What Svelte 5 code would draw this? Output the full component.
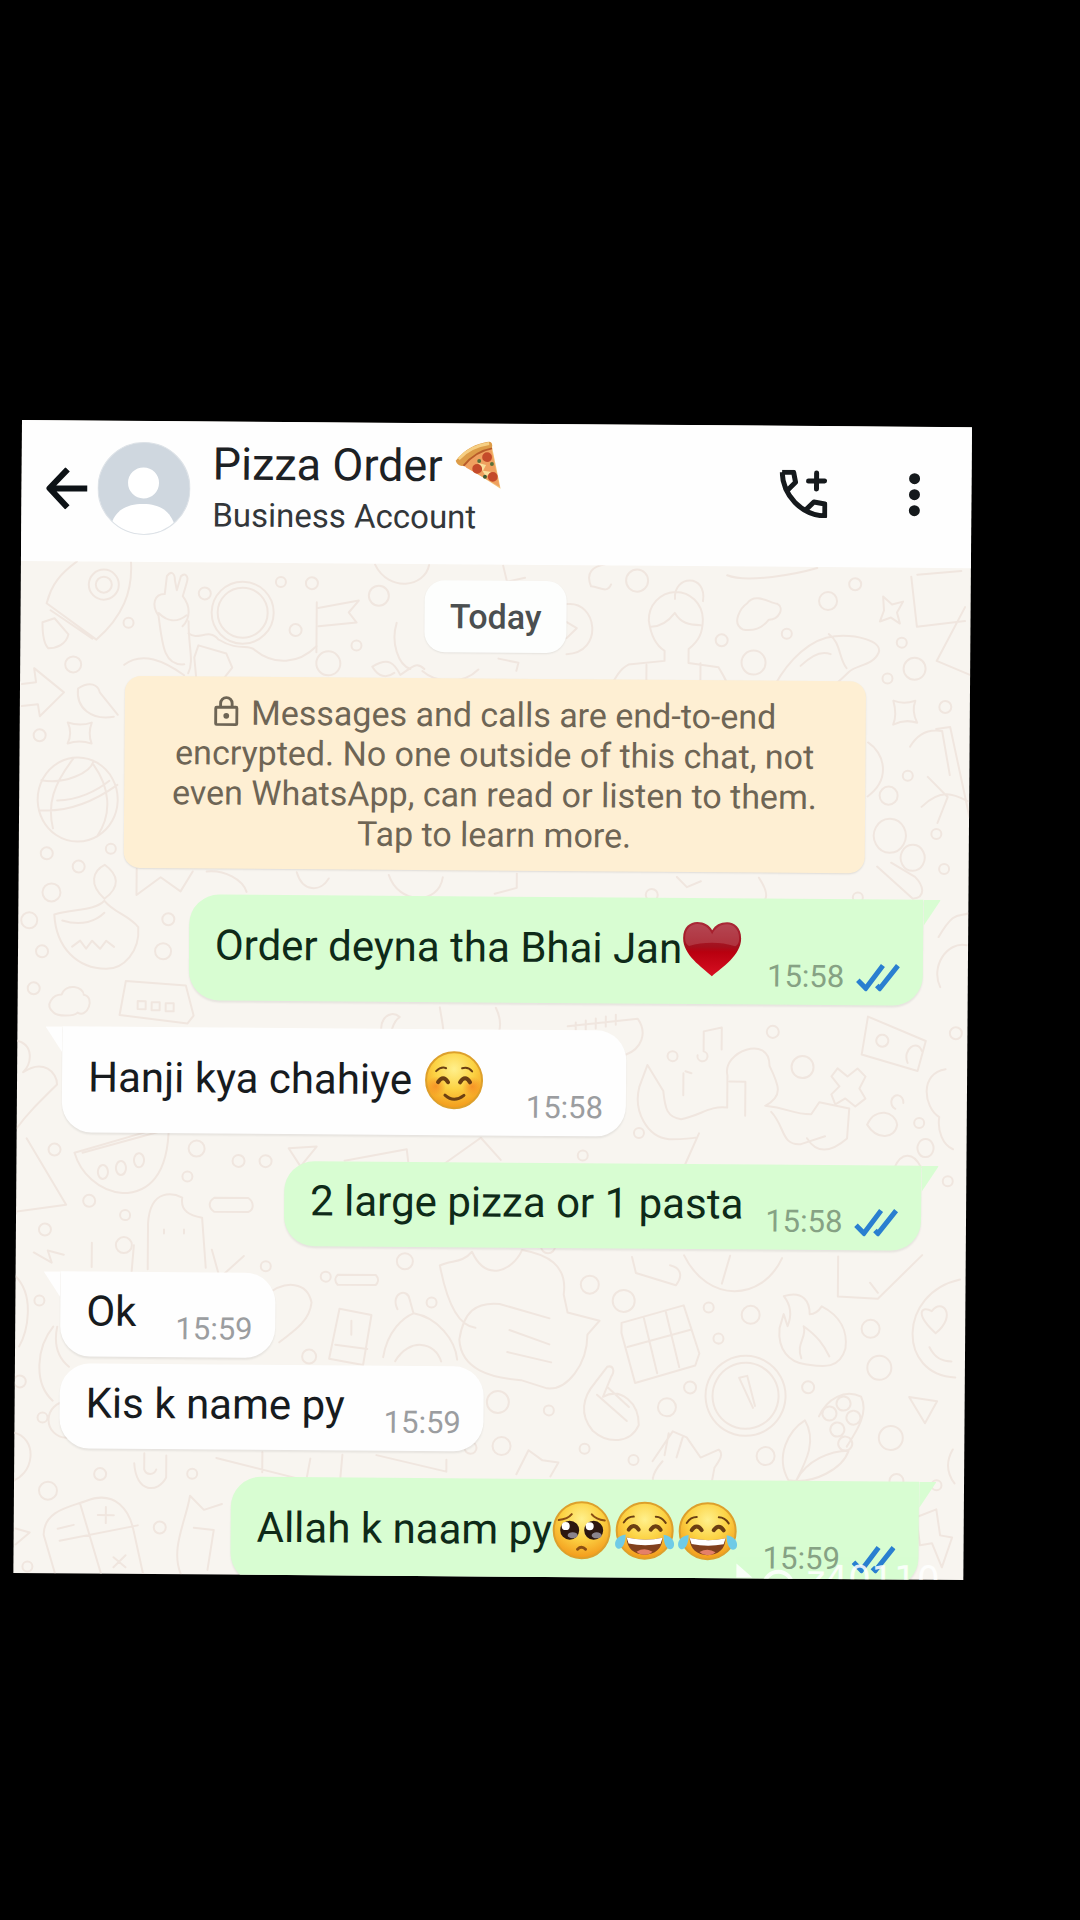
<script lang="ts">
  const contact = { name: "Pizza Order", kind: "Business Account" };

  const messages = [
    { out: true, tail: true, text: "Order deyna tha Bhai Jan", emojis: ["heart"], time: "15:58" },
    { out: false, tail: true, text: "Hanji kya chahiye", spaced: true, emojis: ["smile"], time: "15:58" },
    { out: true, tail: true, text: "2 large pizza or 1 pasta", emojis: [], time: "15:58" },
    { out: false, tail: true, text: "Ok", emojis: [], time: "15:59" },
    { out: false, tail: false, text: "Kis k name py", emojis: [], time: "15:59" },
    { out: true, tail: true, text: "Allah k naam py", emojis: ["plead", "joy", "joy"], time: "15:59" },
  ];

  // small rings scattered over the wallpaper: x, y, radius
  const rings = [
    [75, 664, 8], [130, 622, 5], [206, 592, 6], [282, 580, 5], [313, 581, 6], [297, 628, 6],
    [380, 593, 10], [358, 643, 5], [42, 735, 6], [50, 853, 6], [82, 866, 6], [114, 848, 5],
    [55, 892, 9], [33, 920, 8], [172, 918, 6], [46, 951, 6], [167, 950, 8], [38, 988, 6],
    [638, 576, 11], [723, 635, 6], [755, 657, 12], [788, 628, 5], [829, 595, 9], [856, 578, 6],
    [903, 636, 5], [889, 672, 5], [916, 662, 11], [947, 700, 6], [910, 769, 5], [891, 789, 9],
    [939, 827, 5], [947, 862, 5], [861, 891, 5], [655, 890, 6], [777, 1026, 6], [677, 1051, 5],
    [807, 1061, 11], [924, 1116, 5], [644, 1128, 5], [960, 1026, 6], [953, 1174, 5], [588, 1151, 5],
    [60, 1149, 6], [202, 1147, 8], [244, 1159, 6], [271, 1159, 6], [193, 1175, 5], [95, 1200, 6],
    [131, 1214, 5], [51, 1229, 6], [130, 1244, 8], [272, 1264, 5], [411, 1258, 8], [46, 1300, 5],
    [332, 1274, 5], [438, 1299, 5], [316, 1354, 7], [27, 1381, 6], [50, 1417, 5], [505, 1398, 11],
    [74, 1419, 18], [478, 1444, 6], [509, 1442, 9], [108, 1473, 6], [200, 1472, 5], [56, 1490, 9],
    [168, 1526, 6], [36, 1566, 5], [596, 1280, 9], [630, 1296, 11], [715, 1302, 5], [757, 1309, 9],
    [725, 1333, 5], [877, 1322, 9], [886, 1361, 12], [697, 1382, 6], [674, 1402, 9], [815, 1381, 6],
    [556, 1406, 5], [898, 1431, 12], [592, 1444, 5], [641, 1455, 5], [773, 1450, 9], [904, 1474, 7],
    [944, 1478, 5], [554, 1242, 7],
  ];

  const doodles = [
    // rocket
    "M132 561c2 30-8 55-34 78l-50-36c5-20 14-30 30-42M48 603l4-12M52 610l42 28M44 622c0 14 2 22 6 26 8 0 18-4 20-14l-14-16z",
    // peace hand and sleeve
    "M160 615c-8-12-4-22 6-22l2-18c4-6 8-3 8 4l2 10 4-14c4-4 8 0 6 6l-4 14c8 10 8 22 0 30M160 615c4 30 6 50 26 48M190 620c0 26 6 40 0 52M160 612c8 8 18 10 28 2",
    // astronaut arm, badge
    "M190 632c10 8 20-6 30 6M220 638c20 12 30 4 36 10 20 16 44 14 62-4M200 644l28 8 6 14-14 18-22-8-2-20z",
    // flag
    "M318 606l42-8-10 12 8 10-38 4M318 600v50",
    // arrow with splash
    "M24 684l14-2-2-14 30 24-24 24-2-12-16 2M80 688c12-8 20-4 22 4l18 22M80 688c-2 20 14 32 36 28M126 664c18-14 40-4 60 10",
    // star shapes
    "M70 722q12 4 24 0-4 11 0 21-12-4-24 0 5-10 0-21z",
    "M884 590l9 8 11-3-6 11 3 11-9-6-11 4 4-11z",
    "M895 694q10 4 22 0-4 10 2 22-12-4-24 2 4-10 0-24z",
    // globe
    "M80 757a40 42 0 1 0 1 0M44 780c24 4 50-8 52-20M42 810c30 2 56-10 78-26M56 828c-6-24 0-44 20-70M100 836c16-24 12-50-4-72M60 800c20 0 40-10 52-20",
    // clock and woman
    "M568 600c30-4 38 48 0 50M568 618l10 6-10 10M606 560c-12 2-20 8-14 22 8 0 16 8 20-2",
    "M650 616a27 28 0 0 1 54-2c0 14-4 22-14 30v14l30 4c6 10 10 16 10 22M650 616c2 14 6 24 16 30l0 10-36 4c-8 4-14 14-16 20M652 622c10 0 18-6 24-14 6 10 14 12 26 12M676 594c-2-24 32-26 28 2M648 660v22M702 658v24",
    // cloud shapes
    "M744 624c-12-6-2-22 4-26 8-12 24 0 30 0 8 4 2 16-8 16-6 8-14 12-26 10z",
    "M58 1012c-10-8 0-18 8-18 4-12 22-8 22 0 12 2 4 24-6 18-4 4-20 4-24 0z",
    // shoe and papers
    "M776 680c14-26 36-48 60-50 20-2 48 4 44 16-6 14-22 12-30 20-8 8-14 14-20 14M830 628c12 8 10 24 18 34M802 660c10-10 20-16 30-12",
    "M912 570l6 50 48-6M918 568l44-4M966 600l-28 54 34 14M728 570c20 8 70-2 90-8",
    // branch and paint tube
    "M912 740c8-14 20-18 32-16l8 44M938 722l14-2 20 90M924 800c20-20 34-12 46-6M930 770l20 20-10 26",
    // molecules
    "M892 812a16 17 0 1 0 1 0M915 838a12 13 0 1 0 1 0M880 860l36 32c14-2 10-14 2-22l-24-14M870 736c16 10 24 36 0 54",
    // diya lamp
    "M108 898c-16-14-12-28 0-34 14 10 16 22 0 34zM58 914c22-6 40-4 50-14 10 12 24 14 34 26 2 24-14 42-32 42-28 0-50-20-52-54zM66 920c20 6 34 0 42-8M76 946l8-6 6 8 6-8 8 8 6-8 8 6",
    // boombox
    "M130 980l60 4 8 30-6 8-68-8z M142 1000h8v8h-8zM156 1001h8v8h-8zM170 1002h8v8h-8z",
    // bags behind the cards
    "M140 868v26l24-18 20 14 12-20M210 870c18-2 36 8 40 20M300 870c6 20 24 20 32 6M392 872c10 30 50 30 54 2M520 870v14l-22 6M762 872c8 12 10 20 4 24M680 872l10 10 14-6",
    "M390 1036a9 11 0 1 1 14-22c-10 6-6 20-14 22M444 1004c2 12 4 20 4 28M500 1004c6 12 6 22 0 32",
    // comb and notes
    "M572 1022l70-8c10 14 4 30-12 36M580 1018v10M590 1016v10M600 1014v10M610 1012v10M620 1010v10M708 1046v-20l18-4v22M702 1050a5 5 0 1 0 6-4M690 1066l6 2M688 1090v-22",
    // dancing figure
    "M644 1082l8-22 16 26c2 18 4 26 18 28 20-4 28-14 46-12V1070c-6-24 42-42 42-10 10 20 14 30-4 40 24 2 26 8 46 8l8-12 30 6-2 30c-16 14-30 16-40 0M644 1082c-6 24 8 50 30 52 10 0 20 0 28-2M734 1076h16v34M690 1160l14-32M776 1106c14 14 10 34 30 32l24-8",
    // house and cross
    "M872 1010l58 24-8 30-56-16zM912 1056c-6-14 10-24 14-12M886 1028a6 6 0 1 0 1 0M842 1062l10 8 10-8 8 8-6 12 6 10-10 8-10-8-10 6-4-10 8-8-8-10z",
    "M872 1118c8-18 28-14 30 0-2 14-20 16-30 0M900 1102a6 7 0 1 1 8-6M930 1150a8 9 0 1 1 1 0M900 1160c6-14 18-16 26 0M950 1062c-26 4-22 38-6 48-2 14 4 28 14 32M942 930c16-28 20-20 30-24M944 980c-10-20 6-46 26-42",
    // watermelon
    "M80 1152l94-28c0 50-20 68-46 68-24-2-42-20-48-40zM88 1152l78-22M108 1164a5 7 0 1 0 1 0M126 1160a5 7 0 1 0 1 0M144 1152a5 7 0 1 0 1 0M20 1040c20 4 16 24 8 32 20-14 34 0 34 12-20 20-30 30-40 44",
    // party cone, ghost, note
    "M32 1138l40 66-54 8M154 1268v-46c2-36 26-30 34-26-2 14 8 18 20 20l4 50M170 1228v4M190 1228v4M220 1196h34c6 4 6 12 0 14h-34c-6-4-6-10 0-14zM294 1146l28-2-16 20zM350 1158l62-12 2 16M450 1160l36-26 20 22",
    "M40 1252l18 10-4-12 16 4M98 1242v24M140 1244l-2 26M218 1248l8 28 24-22M344 1272h38c4 4 2 8 0 10h-38c-4-4-2-8 0-10z",
    // leaf, camera, ring
    "M272 1294c20-18 42-14 46 6-2 20-20 30-32 40M346 1306l32 6-8 50-34-6zM342 1342l32 4M358 1318v14M404 1306c-8-16 10-22 12-10l4 14c24 4 42 26 44 46M390 1354c4-26 20-40 30-44M402 1358c14-24 40-20 46 0",
    "M22 1276c20 20 12 56 4 70M60 1326c-16 20-20 56 0 74M64 1326c-4 20 2 32 12 40M20 1432c26 4 24 44-4 50",
    // speech bubbles
    "M446 1262c12-6 22-2 32-14 14 30 40 20 50-2 24 4 46 14 42 44l4 18 32 8-12 14c0 30-20 56-40 54l-26-8c-30-2-60-10-62-40 4-28 16-38 40-36l50 14M446 1262c6 30 16 60 36 62M516 1326l40 14M514 1348l44 10",
    // chocolate
    "M628 1318l62-18 16 48-4 12-60 18-14-50zM634 1342l64-18M650 1312l14 56M672 1306l14 56",
    // flame
    "M790 1290c20-6 26 6 26 18 4 0 8-2 12-8 20 10 26 26 24 42-6 22-24 18-40 16-16-2-28-14-26-36l4-14 4 12c4-10 4-20-4-30zM808 1352c-6-14 6-22 2-32 14 10 20 18 26 30",
    // clocks and baseball
    "M752 1350a40 40 0 1 0 1 0M752 1357a33 33 0 1 0 1 0M746 1372l14 30M746 1372l8-2 8 30M690 1250c24 48 78 46 98 2M728 1278l8-28M638 1252l4 16 40 12c8-10 4-18-6-20",
    "M844 1250l0 40 40 2 44-44M884 1286l-8-10M966 1272c-62 14-62 96-4 98M942 1326c-22-20-14-28-4-22 10-14 26 4 4 22M936 1340c6 12 14 14 22 14",
    // pointing hands
    "M602 1378l12-16c6-2 8 4 4 10l-8 20c18-10 36 6 36 28-8 18-30 20-46 6-14-16-10-34 2-48M604 1390l30 26M614 1382l22 20M660 1456l20-30 14 6 14 20 18-8c6 4 0 12-4 18l-4 22-26 6-26-4c-8-8-8-16 4-30M676 1428l-4 22M690 1432l-6 20",
    // corn
    "M796 1474c-14-24 0-50 16-60 12 20 2 40-8 60 10-20 34-30 52-30-6 18-34 34-60 30zM826 1410c8-18 26-28 42-20 8 16-4 34-14 50M836 1400a7 7 0 1 0 1 0M850 1390a7 7 0 1 0 1 0M860 1404a7 7 0 1 0 1 0M844 1416a7 7 0 1 0 1 0M852 1430a7 7 0 1 0 1 0M916 1390l28 4-12 22z",
    // keyboard and magnet
    "M224 1456l90 22 4-22M270 1450v20M350 1452l-2 24M384 1452l70 16v-12M142 1462c2 30 24 30 32 14v-22M152 1452v16c2 6 10 6 12 0",
    // calculator tablet
    "M52 1534c0-24 26-28 42-34 30-12 44 10 48 30l10 44M52 1534l12 40M88 1502l22 72M68 1540l78-16M106 1514h16M114 1506v16M66 1528l16-4M122 1556l12 10M134 1554l-12 12",
    // torn receipt and bolt
    "M198 1494c-4 26-20 54-8 80M198 1494l14 14 18-6M202 1526l20 2-6 40M924 1510l20-8 4 26 12 2-10 30-10-24-12 2zM24 1528l14 4-14 12",
    "M524 1470l12-24 14 10 16 2-8 14M960 1442c-8 14-4 26 2 34",
    // moon face
    "M398 620c-6 20 2 42 14 46M374 664c16-10 22-4 28 8 12-8 16-14 24-6M424 668c14 12 40 14 56-2M374 664c6 10 14 12 22 6M500 655l20 4-2 8M376 562c14 28 50 22 54 0M504 562l4 16 18-4",
  ];
</script>

{#snippet emoji(kind)}
  <svg class="emoji" viewBox="0 0 60 60" role="img" aria-label={kind}>
    {#if kind === "heart"}
      <path d="M30 57C20 48 1 36 1 19 1 8 8 3 15 3c7 0 12 3 15 8 3-5 8-8 15-8 7 0 14 5 14 16 0 17-19 29-29 38z" fill="url(#heart-fill)" />
      <path d="M3 19C3 10 9 5 15 5c7 0 12 4 15 10 3-6 8-10 15-10 6 0 12 5 12 14 0 5-2 7-4 8-16-5-32-4-46 0-2-1-4-3-4-8z" fill="#fff" opacity="0.14" />
    {:else}
      <circle cx="30" cy="30" r="28" fill="url(#face-fill)" stroke="#dda02c" stroke-width="2" />
      {#if kind === "smile"}
        <circle cx="12" cy="36" r="10" fill="url(#blush-fill)" />
        <circle cx="48" cy="36" r="10" fill="url(#blush-fill)" />
        <g fill="none" stroke-linecap="round" stroke="#6b3f12">
          <path d="M12 21q5-5 10-3M38 18q6-2 10 3" stroke-width="2" />
          <path d="M14 32q5-8 10 0M36 32q5-8 10 0" stroke-width="4" />
          <path d="M21 45q9 8 19 0" stroke-width="3" />
        </g>
      {:else if kind === "plead"}
        <circle cx="18" cy="30" r="9.500" fill="#2c1710" />
        <circle cx="42" cy="30" r="9.500" fill="#2c1710" />
        <circle cx="14" cy="26" r="4" fill="#fff" />
        <circle cx="38" cy="26" r="4" fill="#fff" />
        <ellipse cx="21" cy="35" rx="5" ry="3" fill="#8a838c" />
        <ellipse cx="45" cy="35" rx="5" ry="3" fill="#8a838c" />
        <g fill="none" stroke-linecap="round" stroke="#8a4e13">
          <path d="M7 20q9-1 13-6M53 20q-9-1-13-6" stroke-width="2" />
          <path d="M26 49q4-4 8 0" stroke-width="3" />
        </g>
      {:else}
        <path d="M12 37q18 4 36 0c0 11-8 17-18 17S12 48 12 37z" fill="#81401d" />
        <path d="M12 37q18 4 36 0l-2 6q-16 3-32 0z" fill="#fff" />
        <path d="M22 51q8-5 16 0-3 3-8 3t-8-3z" fill="#e58068" />
        <g fill="none" stroke-linecap="round" stroke="#6b3f12">
          <path d="M9 22q4-6 10-6M41 16q6 0 10 6" stroke-width="2" />
          <path d="M14 29q5-7 10 0M36 29q5-7 10 0" stroke-width="4" />
        </g>
        <path d="M11 34C3 35-1 41 1 46c3 5 10 2 10-12zM49 34c8 1 12 7 10 12-3 5-10 2-10-12z" fill="#6fcbe6" />
      {/if}
    {/if}
  </svg>
{/snippet}

<main class="screen">
  <section class="chat-window">
    <header class="bar">
      <button class="icon-button" aria-label="Back">
        <svg width="42" height="42" viewBox="0 0 42 42" fill="none" stroke="#0d1216" stroke-width="6">
          <path d="M22 2L4 21l18 19M4 21h38" stroke-linejoin="round" />
        </svg>
      </button>
      <svg class="avatar" viewBox="0 0 93 93" aria-hidden="true">
        <clipPath id="avatar-clip"><circle cx="46.5" cy="46.5" r="46" /></clipPath>
        <circle cx="46.5" cy="46.5" r="46" fill="#cfd7df" />
        <g clip-path="url(#avatar-clip)" fill="#fff">
          <circle cx="46" cy="41" r="15.5" />
          <path d="M14 82c6-16 18-20 32-20s26 5 31 20L62 100H30z" />
        </g>
        <circle cx="46.5" cy="46.5" r="46" fill="none" stroke="#dde2e7" />
      </svg>
      <div class="who">
        <h1>
          {contact.name}
          <svg class="pizza" viewBox="0 0 50 50" role="img" aria-label="pizza">
            <path d="M4 21C13 9 23 3 37 1l10 47z" fill="#f3c277" />
            <path d="M7 22C15 13 25 8 37 6l9 40-34-19z" fill="#efa05f" />
            <path d="M1 20C10 8 22 2 35 0q4 1 3 6C27 9 18 14 9 25q-6 1-8-5z" fill="#dd9c48" />
            <path d="M4 18C12 9 22 4 35 2" fill="none" stroke="#f6cf83" stroke-width="3" />
            <path d="M9 25C18 14 27 9 38 7" fill="none" stroke="#b85b2a" stroke-width="2" />
            <path d="M24 22l8 2-3 6 9 1-6 5z" fill="#fadf9c" />
            <circle cx="33" cy="16" r="5" fill="#c44a2a" />
            <circle cx="23" cy="28" r="5" fill="#c44a2a" />
            <circle cx="39" cy="36" r="5" fill="#c44a2a" />
            <circle cx="25" cy="20" r="2" fill="#56713b" />
            <circle cx="38" cy="23" r="2" fill="#56713b" />
            <circle cx="31" cy="36" r="2" fill="#3f5a34" />
          </svg>
        </h1>
        <p>{contact.kind}</p>
      </div>
      <div class="actions">
        <button class="icon-button" aria-label="Add call">
          <svg width="48" height="48" viewBox="0 0 48 48" fill="none" stroke="#15191c" stroke-width="5">
            <path d="M2.500 2.500C3.500 26 22 45 45.500 46V34l-11-2-8 8M2.500 2.500H14l2 10-8 8" stroke-linejoin="round" />
            <path d="M37 3v16M29 11h16" stroke-linecap="round" />
          </svg>
        </button>
        <button class="icon-button" aria-label="More options">
          <svg width="48" height="48" viewBox="0 0 48 48" fill="#15191c">
            <circle cx="24" cy="8" r="5.500" />
            <circle cx="24" cy="24" r="5.500" />
            <circle cx="24" cy="40" r="5.500" />
          </svg>
        </button>
      </div>
    </header>

    <div class="chat">
      <svg class="wallpaper" viewBox="22 561 950 1012" preserveAspectRatio="xMinYMin slice" aria-hidden="true">
        <defs>
          <radialGradient id="face-fill" cx="0.5" cy="0.3" r="0.7">
            <stop offset="0" stop-color="#fff08c" />
            <stop offset="0.5" stop-color="#fcd344" />
            <stop offset="1" stop-color="#f39a1b" />
          </radialGradient>
          <radialGradient id="blush-fill">
            <stop offset="0" stop-color="#f4741c" stop-opacity="0.6" />
            <stop offset="1" stop-color="#f4741c" stop-opacity="0" />
          </radialGradient>
          <linearGradient id="heart-fill" x1="0" y1="0" x2="0" y2="1">
            <stop offset="0" stop-color="#a92a38" />
            <stop offset="0.45" stop-color="#a3101d" />
            <stop offset="0.55" stop-color="#b8000f" />
            <stop offset="1" stop-color="#d80f22" />
          </linearGradient>
        </defs>
        <g fill="none" stroke="#f0e6df" stroke-width="2" stroke-linecap="round" stroke-linejoin="round">
          <circle cx="105" cy="584" r="15" />
          <circle cx="105" cy="584" r="8" />
          <circle cx="244" cy="611" r="25" />
          <circle cx="244" cy="611" r="31" />
          <circle cx="330" cy="661" r="12" />
          {#each rings as [cx, cy, r]}
            <circle {cx} {cy} {r} />
          {/each}
          {#each doodles as d}
            <path {d} />
          {/each}
        </g>
      </svg>

      <div class="thread">
        <time class="day">Today</time>
        <p class="notice">
          <svg class="lock" viewBox="0 0 26 32" fill="none" stroke="#6e6555" stroke-width="3" aria-hidden="true">
            <rect x="2" y="12" width="22" height="18" rx="1" />
            <path d="M7 12V8a6 6 0 0 1 12 0v4" />
            <circle cx="13" cy="21" r="1.500" />
          </svg>
          Messages and calls are end-to-end encrypted. No one outside of this chat, not even WhatsApp, can read or
          listen to them. Tap to learn more.
        </p>

        <ul>
          {#each messages as message}
            <li class="bubble" class:out={message.out} class:tail={message.tail}>
              <span class="text" class:rich={message.emojis.length} class:spaced={message.spaced}>
                {message.text}
                {#each message.emojis as kind}{@render emoji(kind)}{/each}
              </span>
              <span class="meta">
                {message.time}
                {#if message.out}
                  <svg class="ticks" viewBox="0 0 44 28" role="img" aria-label="Read">
                    <path d="M2 17l8 8L27 2M21 22l3 3L42 2" fill="none" stroke="#2a7fd0" stroke-width="5" />
                  </svg>
                {/if}
              </span>
            </li>
          {/each}
        </ul>
      </div>
    </div>

    <div class="watermark">
      <svg width="60" height="40" viewBox="0 0 60 40" fill="none" aria-hidden="true">
        <path d="M2 5l16 14H2z" fill="#fff" />
        <circle cx="44" cy="27" r="14" stroke="#fff" stroke-width="4" />
      </svg>
      <span>z40110</span>
    </div>
  </section>
</main>

<style>
  :global(body) {
    background: #000;
  }

  .screen {
    box-sizing: border-box;
    min-height: 100vh;
    padding: 420px 10% 0 2%;
    overflow: hidden;
    background: #000;
    font-family: Roboto, "Noto Sans", sans-serif;
  }

  .chat-window {
    position: relative;
    display: flex;
    flex-direction: column;
    aspect-ratio: 950 / 1153;
    overflow: hidden;
    background: #f8f5f0;
    transform: rotate(0.43deg);
    transform-origin: 0 0;
  }

  .bar {
    display: flex;
    flex: none;
    align-items: center;
    box-sizing: border-box;
    height: 141px;
    padding: 0 33px 6px 24px;
    background: #fefefe;
  }

  .icon-button {
    display: flex;
    padding: 0;
    border: 0;
    background: none;
  }

  .avatar {
    width: 93px;
    height: 93px;
    margin: 0 22px 0 10px;
  }

  .who {
    flex: 1;
  }

  h1 {
    display: flex;
    align-items: center;
    gap: 12px;
    margin: 0;
    color: #1d2124;
    font-size: 45px;
    font-weight: 400;
    line-height: 52px;
  }

  .pizza {
    width: 49px;
    height: 49px;
  }

  .who p {
    margin: 0;
    color: #33373a;
    font-size: 33px;
    line-height: 50px;
  }

  .actions {
    display: flex;
    gap: 63px;
  }

  .chat {
    position: relative;
    flex: 1;
    min-height: 0;
  }

  .wallpaper {
    position: absolute;
    inset: 0;
    width: 100%;
    height: 100%;
  }

  .thread {
    position: relative;
    display: flex;
    flex-direction: column;
    align-items: center;
    padding-top: 16px;
  }

  .day {
    padding: 16px 25px;
    border-radius: 20px;
    background: #fdfefd;
    box-shadow: 0 1px 2px rgba(0, 0, 0, 0.08);
    color: #4b4f50;
    font-size: 34px;
    font-weight: 500;
    line-height: 40px;
  }

  .notice {
    box-sizing: border-box;
    width: 78%;
    margin: 26px 0;
    padding: 16px 40px;
    border-radius: 16px;
    background: #feefd3;
    box-shadow: 0 1px 2px rgba(0, 0, 0, 0.1);
    color: #6e6555;
    font-size: 34px;
    line-height: 40px;
    text-align: center;
  }

  .lock {
    width: 25px;
    height: 31px;
    margin-right: 4px;
    vertical-align: -2px;
  }

  ul {
    display: flex;
    flex-direction: column;
    align-items: flex-start;
    gap: 27px;
    align-self: stretch;
    margin: 0;
    padding: 0 45px;
    list-style: none;
  }

  .bubble {
    position: relative;
    display: flex;
    align-items: flex-end;
    gap: 39px;
    padding: 15px 23px 0 26px;
    border-radius: 30px;
    background: #fefefe;
    box-shadow: 0 2px 2px rgba(0, 0, 0, 0.07);
    color: #171b1e;
  }

  .bubble:not(.tail) {
    margin-top: -20px;
  }

  .bubble.tail {
    border-top-left-radius: 0;
  }

  .bubble.tail::before {
    content: "";
    position: absolute;
    top: 0;
    right: 100%;
    width: 17px;
    height: 26px;
    background: inherit;
    clip-path: polygon(0 0, 100% 0, 100% 100%);
  }

  .bubble.out {
    align-self: flex-end;
    gap: 22px;
    background: #d8fdd2;
    color: #0e2a18;
  }

  .bubble.out.tail {
    border-top-left-radius: 30px;
    border-top-right-radius: 0;
  }

  .bubble.out.tail::before {
    right: auto;
    left: 100%;
    clip-path: polygon(0 0, 100% 0, 0 100%);
  }

  .text {
    display: flex;
    align-items: center;
    padding-bottom: 20px;
    font-size: 42px;
    line-height: 50px;
    white-space: nowrap;
  }

  .rich {
    line-height: 71px;
  }

  .spaced {
    gap: 12px;
  }

  .emoji {
    width: 60px;
    height: 60px;
    margin-right: 3px;
  }

  .meta {
    display: flex;
    align-items: center;
    gap: 12px;
    padding-bottom: 11px;
    color: #9b9da0;
    font-size: 31px;
    line-height: 35px;
  }

  .out .meta {
    color: #86a284;
  }

  .ticks {
    width: 44px;
    height: 28px;
  }

  .watermark {
    position: absolute;
    right: 24px;
    bottom: -20px;
    display: flex;
    gap: 12px;
    color: #fff;
    font-family: "DejaVu Sans", sans-serif;
    font-size: 36px;
    line-height: 40px;
    opacity: 0.85;
  }
</style>
